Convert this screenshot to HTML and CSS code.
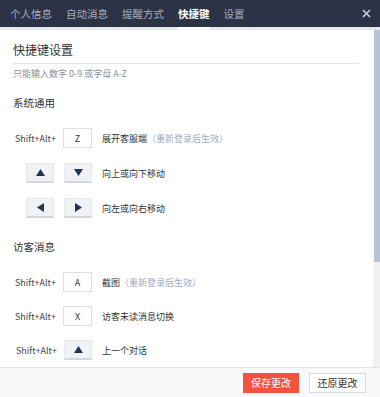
FILE: index.html
```html
<!DOCTYPE html>
<html lang="zh-CN">
<head>
  <meta charset="UTF-8">
  <title>快捷键设置</title>
  <link rel="stylesheet" href="styles.css">
</head>
<body>
  <!-- TABS -->
  <div class="tabs">
    <div class="tab">个人信息</div>
    <div class="tab">自动消息</div>
    <div class="tab">提醒方式</div>
    <div class="tab active">快捷键</div>
    <div class="tab">设置</div>
    <div class="close">
      <svg width="9" height="9" viewBox="0 0 9 9"><path d="M1 1L8 8M8 1L1 8" stroke="#c9cdd6" stroke-width="1.6" fill="none"/></svg>
    </div>
  </div>

  <!-- CONTENT + SCROLLBAR -->
  <div class="main">
    <div class="content">
      <h2 class="title">快捷键设置</h2>
      <p class="tip">只能输入数字 0-9 或字母 A-Z</p>

      <div class="group">
        <h3 class="sec-title">系统通用</h3>
        <div class="row">
          <div class="keys"><span class="mod">Shift+Alt+</span><span class="key">Z</span></div>
          <div class="desc">展开客服端<span class="hint">（重新登录后生效）</span></div>
        </div>
        <div class="row">
          <div class="keys">
            <span class="arrow"><svg width="9" height="7" viewBox="0 0 9 7"><path d="M4.5 0L9 7H0Z" fill="#243350"/></svg></span>
            <span class="arrow"><svg width="9" height="7" viewBox="0 0 9 7"><path d="M0 0H9L4.5 7Z" fill="#243350"/></svg></span>
          </div>
          <div class="desc">向上或向下移动</div>
        </div>
        <div class="row">
          <div class="keys">
            <span class="arrow"><svg width="7" height="9" viewBox="0 0 7 9"><path d="M0 4.5L7 0V9Z" fill="#243350"/></svg></span>
            <span class="arrow"><svg width="7" height="9" viewBox="0 0 7 9"><path d="M0 0L7 4.5L0 9Z" fill="#243350"/></svg></span>
          </div>
          <div class="desc">向左或向右移动</div>
        </div>
      </div>

      <div class="group">
        <h3 class="sec-title">访客消息</h3>
        <div class="row">
          <div class="keys"><span class="mod">Shift+Alt+</span><span class="key">A</span></div>
          <div class="desc">截图<span class="hint">（重新登录后生效）</span></div>
        </div>
        <div class="row">
          <div class="keys"><span class="mod">Shift+Alt+</span><span class="key">X</span></div>
          <div class="desc">访客未读消息切换</div>
        </div>
        <div class="row">
          <div class="keys"><span class="mod">Shift+Alt+</span><span class="arrow"><svg width="9" height="7" viewBox="0 0 9 7"><path d="M4.5 0L9 7H0Z" fill="#243350"/></svg></span></div>
          <div class="desc">上一个对话</div>
        </div>
      </div>
    </div>

    <div class="scrollbar">
      <div class="thumb"></div>
    </div>
  </div>

  <!-- FOOTER -->
  <div class="footer">
    <button class="btn btn-save">保存更改</button>
    <button class="btn btn-reset">还原更改</button>
  </div>
</body>
</html>
```

FILE: styles.css
```css
* {
  margin: 0;
  padding: 0;
  box-sizing: border-box;
}

body {
  font-family: "Noto Sans CJK SC", "Noto Sans", sans-serif;
  width: 380px;
  height: 397px;
  display: flex;
  flex-direction: column;
  background: #fff;
  color: #333;
  overflow: hidden;
}

/* TABS */
.tabs {
  height: 30px;
  flex-shrink: 0;
  display: flex;
  align-items: center;
  gap: 14px;
  padding-left: 10px;
  background: #2c3346;
  border-bottom: 3px solid #e4e7ec;
}

.tab {
  position: relative;
  height: 27px;
  line-height: 28px;
  font-size: 10.5px;
  color: #a9aebb;
}

.tab.active {
  color: #fff;
  font-weight: bold;
}

.tab.active::after {
  content: "";
  position: absolute;
  left: 0;
  right: 0;
  bottom: -3px;
  height: 3px;
  background: #fff;
}

.close {
  margin-left: auto;
  margin-right: 9px;
  display: flex;
}

/* CONTENT */
.main {
  flex: 1;
  min-height: 0;
  display: flex;
}

.content {
  flex: 1;
  overflow: hidden;
  padding: 12px 14px 0 13px;
}

.scrollbar {
  width: 7px;
  flex-shrink: 0;
  background: #eef0f3;
  border-left: 1px solid #f6f7f9;
}

.thumb {
  height: 232px;
  background: #b5c5d7;
}

.title {
  font-size: 12px;
  font-weight: normal;
  line-height: 16px;
  color: #333;
  padding-bottom: 5px;
  border-bottom: 1px solid #e2e6ee;
}

.tip {
  font-size: 9px;
  line-height: 12px;
  color: #8b9099;
  margin-top: 4px;
}

.group {
  margin-top: 16px;
}

.group + .group {
  margin-top: 22px;
}

.sec-title {
  font-size: 10.5px;
  font-weight: normal;
  line-height: 14px;
  color: #333;
  margin-bottom: 18px;
}

.row {
  display: flex;
  align-items: center;
  height: 20px;
}

.row + .row {
  margin-top: 14px;
}

.group:first-of-type .row + .row {
  margin-top: 15px;
}

.keys {
  width: 79px;
  flex-shrink: 0;
  display: flex;
  align-items: center;
  justify-content: flex-end;
  gap: 10px;
}

.mod {
  font-size: 9px;
  color: #444;
  margin-right: -3px;
}

.key {
  width: 29px;
  height: 20px;
  border: 1px solid #dadee6;
  background: #fff;
  font-size: 9px;
  display: flex;
  align-items: center;
  justify-content: center;
  color: #333;
}

.arrow {
  width: 28px;
  height: 20px;
  background: #f1f2f5;
  border: 1px solid #e6e9ee;
  border-bottom: 2px solid #d3d8e0;
  display: flex;
  align-items: center;
  justify-content: center;
}

.desc {
  margin-left: 10px;
  font-size: 9px;
  color: #333;
  white-space: nowrap;
}

.hint {
  color: #9dabbf;
}

/* FOOTER */
.footer {
  height: 30px;
  flex-shrink: 0;
  display: flex;
  justify-content: flex-end;
  align-items: center;
  gap: 10px;
  padding-right: 14px;
  border-top: 1px solid #e2e5ea;
  background: #f8f9fb;
}

.btn {
  height: 20px;
  font-family: inherit;
  font-size: 10px;
  white-space: nowrap;
  border: 1px solid #d6dae1;
  background: #fff;
  color: #333;
  cursor: pointer;
}

.btn-save {
  width: 56px;
  background: #f5533e;
  border-color: #f5533e;
  color: #fff;
}

.btn-reset {
  width: 57px;
}
```
